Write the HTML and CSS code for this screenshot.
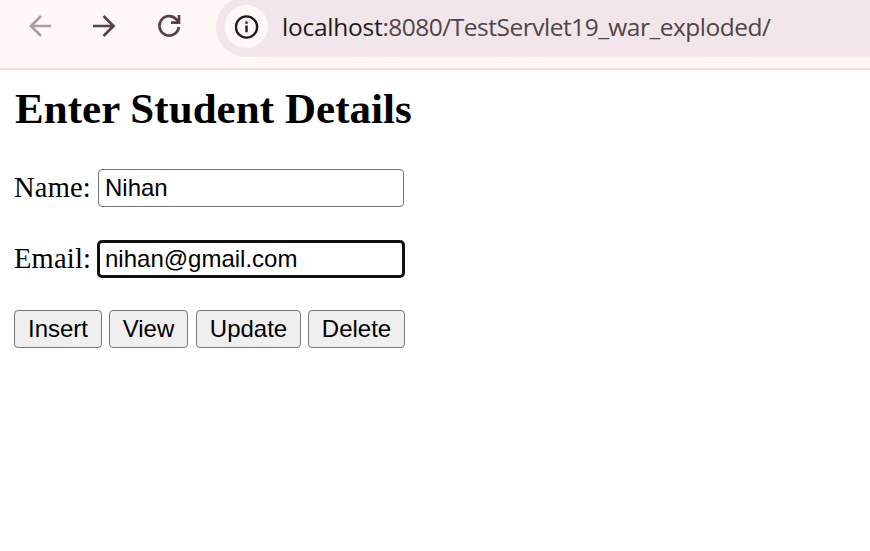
FILE: index.html
```html
<!DOCTYPE html>
<html lang="en">
<head>
<meta charset="utf-8">
<title>Student Details</title>
<link rel="stylesheet" href="styles.css">
</head>
<body>
<header class="toolbar">
  <nav class="nav">
    <svg class="icon back" width="24" height="24" viewBox="0 0 24 24"><path d="M23 12H3M13 2L3 12L13 22"/></svg>
    <svg class="icon" width="24" height="24" viewBox="0 0 24 24"><path d="M0 12H20M10.500 2L20.500 12L10.500 22"/></svg>
    <svg class="icon" width="24" height="24" viewBox="0 0 24 24"><path d="M20.800 13A9.700 9.700 0 1 1 18.200 5.200L21 8M21 1V8.700H13"/></svg>
  </nav>
  <div class="address">
    <span class="info">
      <svg width="24" height="24" viewBox="0 0 24 24"><circle class="ring" cx="11.500" cy="12" r="10.600"/><path class="stem" d="M11.500 10.500V17.300M11.500 6.500V8.700"/></svg>
    </span>
    <span class="url"><span class="host">localhost</span>:8080/TestServlet19_war_exploded/</span>
  </div>
</header>
<main class="page">
  <h2 class="title">Enter Student Details</h2>
  <form class="form">
    <div class="row"><label class="label" for="name">Name:</label><input class="field" id="name" type="text" value="Nihan"></div>
    <div class="row"><label class="label" for="email">Email:</label><input class="field focused" id="email" type="text" value="nihan@gmail.com"></div>
    <div class="actions">
      <button class="button insert" type="button">Insert</button>
      <button class="button view" type="button">View</button>
      <button class="button update" type="button">Update</button>
      <button class="button delete" type="button">Delete</button>
    </div>
  </form>
</main>
</body>
</html>
```
FILE: styles.css
```css
* { box-sizing: border-box; }
body { margin: 0; background: #fff; color: #000; overflow: hidden; }
.toolbar { display: flex; height: 70px; background: #fff8f6; border-bottom: 2px solid #f2dde1; overflow: hidden; }
.nav { display: flex; flex: none; width: 216px; height: 52px; padding-left: 28px; gap: 41px; align-items: center; }
.icon { flex: none; fill: none; stroke: #574145; stroke-width: 2.7; }
.back { stroke: #aba0a1; }
.address { display: flex; flex: 1; align-items: center; height: 60px; margin-top: -3px; padding-left: 9px; background: #f2e6ea; border-radius: 30px 0 0 30px; }
.info { display: flex; flex: none; align-items: center; justify-content: center; width: 43px; height: 43px; margin-top: -1px; border-radius: 50%; background: #fff8f6; }
.ring { fill: none; stroke: #201a1b; stroke-width: 2.4; }
.stem { fill: none; stroke: #201a1b; stroke-width: 2.4; }
.url { margin-left: 14px; font: 24.5px/34px "Open Sans", "Noto Sans", sans-serif; color: #514347; white-space: nowrap; letter-spacing: -0.5px; }
.host { color: #201a1b; letter-spacing: -0.25px; }
.page { padding: 14px 14px 0; }
.title { margin: 0 0 0 1px; font: bold 43px/50px "Liberation Serif", serif; letter-spacing: 0.05px; white-space: nowrap; }
.form { margin-top: 35px; }
.row { display: flex; align-items: center; height: 38px; margin-bottom: 33px; }
.row + .row { margin-bottom: 32px; }
.label { width: 84px; font: 28.5px/36px "Liberation Serif", serif; letter-spacing: 0.2px; white-space: nowrap; }
.field { width: 306px; height: 38px; padding: 0 6px; border: 1px solid #767676; border-radius: 4px; background: #fff; color: #000; font: 24px "Liberation Sans", sans-serif; outline: none; }
.focused { width: 308px; margin-left: -1px; padding: 0 5px; border: 3px solid #101010; border-radius: 5px; }
.actions { display: flex; gap: 7px; }
.button { height: 38px; padding: 0; border: 1px solid #767676; border-radius: 4px; background: #efefef; color: #000; font: 24px "Liberation Sans", sans-serif; }
.insert { width: 88px; }
.view { width: 79px; margin-right: 1px; }
.update { width: 105px; }
.delete { width: 97px; }
```
